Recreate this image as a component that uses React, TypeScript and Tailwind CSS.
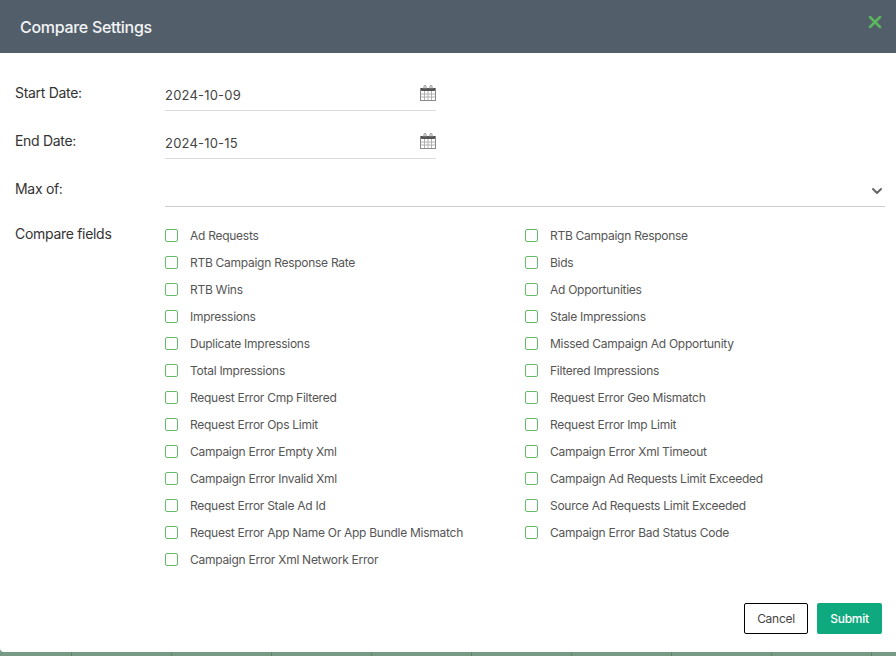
import { ChevronDown, X } from "lucide-react";

const FIELDS = [
    ["Ad Requests", "RTB Campaign Response"],
    ["RTB Campaign Response Rate", "Bids"],
    ["RTB Wins", "Ad Opportunities"],
    ["Impressions", "Stale Impressions"],
    ["Duplicate Impressions", "Missed Campaign Ad Opportunity"],
    ["Total Impressions", "Filtered Impressions"],
    ["Request Error Cmp Filtered", "Request Error Geo Mismatch"],
    ["Request Error Ops Limit", "Request Error Imp Limit"],
    ["Campaign Error Empty Xml", "Campaign Error Xml Timeout"],
    ["Campaign Error Invalid Xml", "Campaign Ad Requests Limit Exceeded"],
    ["Request Error Stale Ad Id", "Source Ad Requests Limit Exceeded"],
    ["Request Error App Name Or App Bundle Mismatch", "Campaign Error Bad Status Code"],
    ["Campaign Error Xml Network Error", ""],
];

function CalendarIcon() {
    return (
        <svg width="16" height="16" viewBox="0 0 16 16" className="shrink-0">
            <rect x="0.5" y="3.5" width="15" height="12" fill="#fff" stroke="#8a8a8a" />
            <rect x="1" y="3" width="14" height="3" fill="#555" />
            <path d="M1 9h14M1 12h14M4.5 6v9M8 6v9M11.5 6v9" stroke="#b0b0b0" strokeWidth="1" />
            <path d="M4 4V1.5a1 1 0 0 1 2 0V4M10 4V1.5a1 1 0 0 1 2 0V4" fill="none" stroke="#888" strokeWidth="1" />
        </svg>
    );
}

function DateField({ label, value }: { label: string; value: string }) {
    return (
        <div className="flex h-12">
            <label className="w-[165px] pl-[15px] pt-[7px] text-sm tracking-[-0.3px] text-[#333]">{label}</label>
            <div className="w-[271px] h-[35px] border-b border-[#dcdcdc] flex items-center justify-between">
                <span className="pt-[5px] text-[13px] text-[#444] tracking-[0.2px]">{value}</span>
                <CalendarIcon />
            </div>
        </div>
    );
}

function Field({ label }: { label: string }) {
    return (
        <div className="flex items-center h-[27px]">
            {label && (
                <>
                    <span className="w-[13px] h-[13px] rounded-[2px] border border-[#66bb6a] bg-white" />
                    <span className="ml-3 text-xs tracking-[-0.27px] text-[#555]">{label}</span>
                </>
            )}
        </div>
    );
}

export default function App() {
    return (
        <div className="w-[896px] h-[656px] overflow-hidden bg-[#779a84] font-['Inter',sans-serif]">
            <div className="h-[652px] bg-white rounded-bl-[4px] flex flex-col">
                <div className="h-[53px] bg-[#525f6b] flex items-center justify-between pl-5 pr-[11px] shrink-0">
                    <span className="text-base font-medium tracking-[-0.3px] text-[#f2f4f5]">Compare Settings</span>
                    <X size={20} strokeWidth={3} className="text-[#5cb85c] -mt-[9px]" />
                </div>
                <div className="pt-[23px]">
                    <DateField label="Start Date:" value="2024-10-09" />
                    <DateField label="End Date:" value="2024-10-15" />
                    <div className="flex h-12">
                        <label className="w-[165px] pl-[15px] pt-[7px] text-sm tracking-[-0.3px] text-[#333]">Max of:</label>
                        <div className="w-[720px] h-[35px] border-b border-[#ccc] flex items-center justify-end pt-1">
                            <ChevronDown size={16} strokeWidth={3} className="text-[#666]" />
                        </div>
                    </div>
                    <div className="flex mt-[2px]">
                        <label className="w-[165px] pl-[15px] pt-[2px] text-sm tracking-[-0.3px] text-[#333]">Compare fields</label>
                        <div className="grid grid-cols-[360px_360px]">
                            {FIELDS.map(([a, b]) => (
                                <div key={a} className="contents">
                                    <Field label={a} />
                                    <Field label={b} />
                                </div>
                            ))}
                        </div>
                    </div>
                </div>
                <div className="mt-auto flex justify-end gap-[9px] pr-[14px] pb-[18px]">
                    <button className="w-[64px] h-[31px] rounded-[2px] border border-black bg-white text-xs tracking-[-0.27px] text-[#444]">Cancel</button>
                    <button className="w-[65px] h-[31px] rounded-[2px] bg-[#0fa97f] text-xs font-medium tracking-[-0.27px] text-white">Submit</button>
                </div>
            </div>
            <div className="h-1 flex">
                <div className="w-[72px] border-r border-[#66856f]" />
                {[0, 1, 2, 3, 4, 5, 6, 7].map((n) => (
                    <div key={n} className="w-[100px] border-r border-[#66856f]" />
                ))}
            </div>
        </div>
    );
}
